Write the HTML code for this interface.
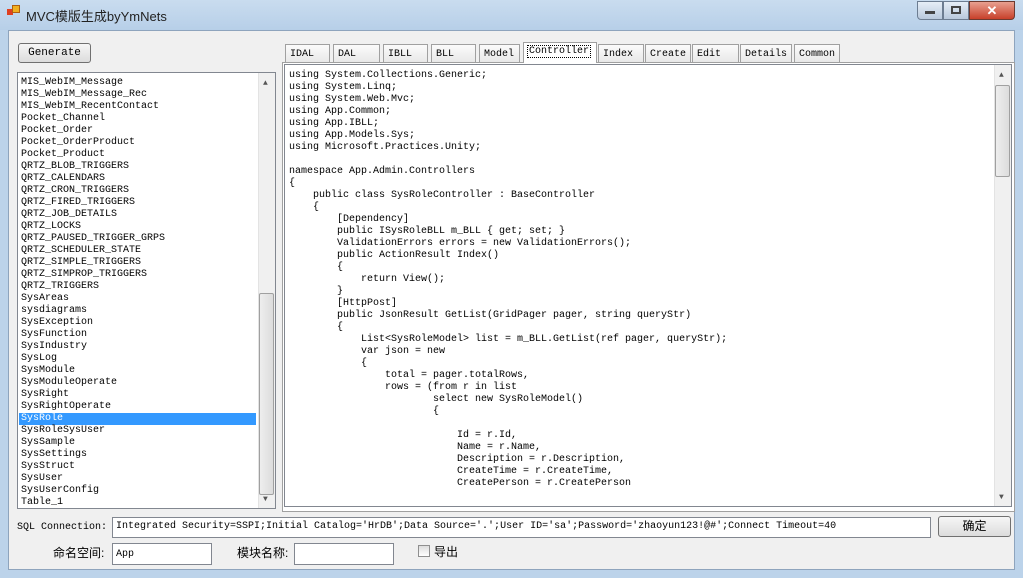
<!DOCTYPE html>
<html><head><meta charset="utf-8"><style>
*{margin:0;padding:0;box-sizing:border-box}
body{width:1023px;height:578px;overflow:hidden;background:#bcd3ea;font-family:"Liberation Mono",monospace;position:relative}
.abs{position:absolute}
.title{left:0;top:0;width:1023px;height:30px;background:linear-gradient(#c9dcef,#b7cfe8)}
.client{left:8px;top:30px;width:1007px;height:540px;background:#f0f0f0;border:1px solid #8ea4bd}
.btn{background:linear-gradient(#f6f6f6,#dcdcdc);border:1px solid #707070;border-radius:3px;font-size:11px;text-align:center}
.box{background:#fff;border:1px solid #828790}
pre{font-family:"Liberation Mono",monospace;font-size:10px;line-height:12px;color:#000;letter-spacing:0}
.sb{background:#f0f0f0;border-left:1px solid #e3e3e3}
.thumb{background:linear-gradient(90deg,#eee,#dcdcdc);border:1px solid #a0a0a0;border-radius:2px}
.tab{top:44px;height:18px;border:1px solid #a0a0a0;border-bottom:none;background:linear-gradient(#fbfbfb,#e8e8e8);font-size:10px;padding:4px 0 0 4px}
.lbl{font-size:10px}
.cjk{font-family:"Liberation Sans","Noto Sans CJK SC",sans-serif;font-size:12px}
</style></head><body>
<div class="abs title"></div>
<div class="abs" style="left:7px;top:9px;width:6px;height:6px;background:#e04020"></div>
<div class="abs" style="left:12px;top:5px;width:8px;height:8px;background:#f0b020;border:1px solid #b06010"></div>
<div class="abs cjk" style="left:26px;top:6px;font-size:13px;color:#222">MVC模版生成byYmNets</div>
<div class="abs" style="left:917px;top:1px;width:26px;height:19px;border:1px solid #6d7d91;border-radius:0 0 0 4px;background:linear-gradient(#e6eef7,#b9c9dc)"></div>
<div class="abs" style="left:925px;top:11px;width:10px;height:3px;background:#444"></div>
<div class="abs" style="left:943px;top:1px;width:26px;height:19px;border:1px solid #6d7d91;background:linear-gradient(#e6eef7,#b9c9dc)"></div>
<div class="abs" style="left:951px;top:6px;width:10px;height:8px;border:2px solid #444"></div>
<div class="abs" style="left:969px;top:1px;width:46px;height:19px;border:1px solid #6d3a30;border-radius:0 0 4px 0;background:linear-gradient(#e8a090,#c8402a);color:#fff;font:bold 13px 'Liberation Sans',sans-serif;text-align:center;line-height:17px">✕</div>
<div class="abs client"></div>

<div class="abs btn" style="left:18px;top:43px;width:73px;height:20px;line-height:18px">Generate</div>

<div class="abs box" style="left:17px;top:72px;width:259px;height:437px;overflow:hidden">
<pre style="position:absolute;left:3px;top:4px">MIS_WebIM_Message
MIS_WebIM_Message_Rec
MIS_WebIM_RecentContact
Pocket_Channel
Pocket_Order
Pocket_OrderProduct
Pocket_Product
QRTZ_BLOB_TRIGGERS
QRTZ_CALENDARS
QRTZ_CRON_TRIGGERS
QRTZ_FIRED_TRIGGERS
QRTZ_JOB_DETAILS
QRTZ_LOCKS
QRTZ_PAUSED_TRIGGER_GRPS
QRTZ_SCHEDULER_STATE
QRTZ_SIMPLE_TRIGGERS
QRTZ_SIMPROP_TRIGGERS
QRTZ_TRIGGERS
SysAreas
sysdiagrams
SysException
SysFunction
SysIndustry
SysLog
SysModule
SysModuleOperate
SysRight
SysRightOperate
<span style="display:inline-block;width:237px;background:#3399ff;color:#fff;margin-left:-2px;padding-left:2px">SysRole</span>
SysRoleSysUser
SysSample
SysSettings
SysStruct
SysUser
SysUserConfig
Table_1</pre>
<div class="abs sb" style="left:240px;top:0;width:17px;height:435px"></div>
<div class="abs thumb" style="left:241px;top:220px;width:15px;height:202px"></div>
<div class="abs" style="left:245px;top:6px;font-size:8px;color:#555">▲</div>
<div class="abs" style="left:245px;top:422px;font-size:8px;color:#555">▼</div>
</div>

<div class="abs tab" style="left:285px;width:45px">IDAL</div>
<div class="abs tab" style="left:333px;width:47px">DAL</div>
<div class="abs tab" style="left:383px;width:45px">IBLL</div>
<div class="abs tab" style="left:431px;width:45px">BLL</div>
<div class="abs tab" style="left:479px;width:41px">Model</div>
<div class="abs tab" style="left:523px;top:42px;height:21px;width:74px;background:#fff;z-index:2;padding-top:3px"><span style="outline:1px dotted #000;padding:0 1px">Controller</span></div>
<div class="abs tab" style="left:598px;width:46px">Index</div>
<div class="abs tab" style="left:645px;width:46px">Create</div>
<div class="abs tab" style="left:692px;width:47px">Edit</div>
<div class="abs tab" style="left:740px;width:52px">Details</div>
<div class="abs tab" style="left:794px;width:46px">Common</div>

<div class="abs" style="left:282px;top:62px;width:733px;height:450px;background:#fff;border:1px solid #a0a0a0"></div>
<div class="abs box" style="left:284px;top:64px;width:728px;height:443px;overflow:hidden">
<pre style="position:absolute;left:4px;top:5px">using System.Collections.Generic;
using System.Linq;
using System.Web.Mvc;
using App.Common;
using App.IBLL;
using App.Models.Sys;
using Microsoft.Practices.Unity;

namespace App.Admin.Controllers
{
    public class SysRoleController : BaseController
    {
        [Dependency]
        public ISysRoleBLL m_BLL { get; set; }
        ValidationErrors errors = new ValidationErrors();
        public ActionResult Index()
        {
            return View();
        }
        [HttpPost]
        public JsonResult GetList(GridPager pager, string queryStr)
        {
            List&lt;SysRoleModel&gt; list = m_BLL.GetList(ref pager, queryStr);
            var json = new
            {
                total = pager.totalRows,
                rows = (from r in list
                        select new SysRoleModel()
                        {

                            Id = r.Id,
                            Name = r.Name,
                            Description = r.Description,
                            CreateTime = r.CreateTime,
                            CreatePerson = r.CreatePerson</pre>
<div class="abs sb" style="left:709px;top:0;width:17px;height:441px"></div>
<div class="abs thumb" style="left:710px;top:20px;width:15px;height:92px"></div>
<div class="abs" style="left:714px;top:6px;font-size:8px;color:#555">▲</div>
<div class="abs" style="left:714px;top:428px;font-size:8px;color:#555">▼</div>
</div>

<div class="abs lbl" style="left:17px;top:522px">SQL Connection:</div>
<div class="abs box" style="left:112px;top:517px;width:819px;height:21px;font-size:10px;padding:3px 0 0 3px;white-space:nowrap">Integrated Security=SSPI;Initial Catalog='HrDB';Data Source='.';User ID='sa';Password='zhaoyun123!@#';Connect Timeout=40</div>
<div class="abs btn cjk" style="left:938px;top:516px;width:73px;height:21px;line-height:19px">确定</div>

<div class="abs cjk" style="left:53px;top:544px">命名空间:</div>
<div class="abs box" style="left:112px;top:543px;width:100px;height:22px;font-size:10px;padding:5px 0 0 3px">App</div>
<div class="abs cjk" style="left:237px;top:544px">模块名称:</div>
<div class="abs box" style="left:294px;top:543px;width:100px;height:22px"></div>
<div class="abs" style="left:418px;top:545px;width:12px;height:12px;border:1px solid #8f8f8f;background:linear-gradient(#ddd,#fff)"></div>
<div class="abs cjk" style="left:434px;top:543px">导出</div>
</body></html>
